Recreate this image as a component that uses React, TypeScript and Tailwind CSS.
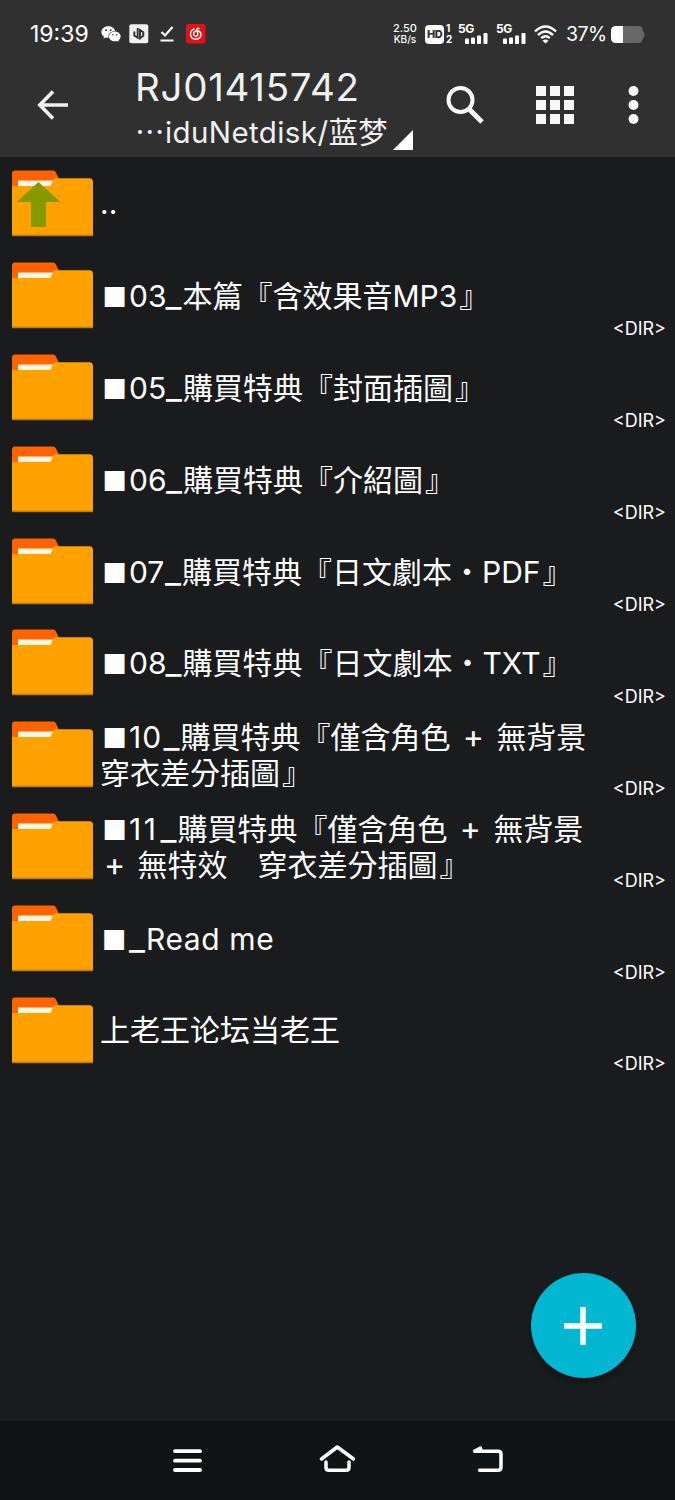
import { AiFillWechat } from "react-icons/ai";

type Entry = {
  id: string;
  lines: string[];
  up?: boolean;
};

const ENTRIES: Entry[] = [
  { id: "up", lines: [".."], up: true },
  { id: "03", lines: ["■03_本篇『含效果音MP3』"] },
  { id: "05", lines: ["■05_購買特典『封面插圖』"] },
  { id: "06", lines: ["■06_購買特典『介紹圖』"] },
  { id: "07", lines: ["■07_購買特典『日文劇本・PDF』"] },
  { id: "08", lines: ["■08_購買特典『日文劇本・TXT』"] },
  { id: "10", lines: ["■10_購買特典『僅含角色 + 無背景", "穿衣差分插圖』"] },
  { id: "11", lines: ["■11_購買特典『僅含角色 + 無背景", "+ 無特效　穿衣差分插圖』"] },
  { id: "readme", lines: ["■_Read me"] },
  { id: "forum", lines: ["上老王论坛当老王"] },
];

// Widths of the number between the square and the underscore
const NUMBER_WIDTH: Record<string, string> = {
  "03": "w-[36.5px]",
  "05": "w-[37px]",
  "06": "w-[37px]",
  "07": "w-[36px]",
  "08": "w-[36.5px]",
  "10": "w-[34.5px] tracking-[1px]",
  "11": "w-[31.5px] tracking-[2.5px]",
};

function FolderIcon({ up }: { up?: boolean }) {
  return (
    <svg width="81" height="67" viewBox="0 0 81 67" className="block shrink-0">
      <path d="M0 30V3.5Q0 .5 3 .5H41Q43 .5 44 2.5L47 9V30H0Z" fill="#ff6200" />
      <path
        d="M0 16H38L40.5 10.5Q41.8 8.3 44 8.3H77.5Q81 8.3 81 12V66H0Z"
        fill="#ffa200"
      />
      <path d="M6 10.5H41L38.5 16H6Z" fill="#fff6e0" />
      <rect y="64.6" width="81" height="1.6" fill="#c47d00" />
      {up && <path d="M26.5 12L48.5 32H34V57H19V32H4.5Z" fill="#859900" />}
    </svg>
  );
}

/* Splits out the glyphs that sit in a cell of their own */
function Line({ text }: { text: string }) {
  return (
    <span className="block whitespace-pre">
      {text.split(/(■|\+|_|』|\d\d(?=_))/).map((part, i) => {
        if (part === "■") {
          return (
            <span key={i} className="inline-block w-[29px] text-center text-[27px] leading-none">
              ■
            </span>
          );
        }
        if (part === "+") {
          return (
            <span key={i} className="inline-block w-[29px] text-center text-[32px] leading-none">
              +
            </span>
          );
        }
        if (part === "_") {
          return (
            <span key={i} className="inline-block w-[17px] text-[35px] leading-none">
              _
            </span>
          );
        }
        if (part === "』") {
          return (
            <span key={i} className="ml-[2px]">
              』
            </span>
          );
        }
        if (NUMBER_WIDTH[part]) {
          return (
            <span key={i} className={`inline-block ${NUMBER_WIDTH[part]}`}>
              {part}
            </span>
          );
        }
        return part;
      })}
    </span>
  );
}

function EntryRow({ entry }: { entry: Entry }) {
  return (
    <li className="flex h-[91.9px] items-center pl-3">
      <FolderIcon up={entry.up} />
      <p
        className={
          entry.id === "readme"
            ? "ml-[7px] flex-1 text-[30px] leading-[36px] tracking-[0.6px] text-white"
            : "ml-[7px] flex-1 text-[30px] leading-[36px] text-white"
        }
      >
        {entry.lines.map((line) => (
          <Line key={line} text={line} />
        ))}
      </p>
      {!entry.up && (
        <span className="mr-[9px] self-end text-[18px] leading-[24px] text-white">&lt;DIR&gt;</span>
      )}
    </li>
  );
}

function Signal() {
  return (
    <div className="relative h-5 w-[30px] text-white">
      <span className="absolute -top-px left-0 text-[12px] leading-[12px] font-bold tracking-[-0.5px]">5G</span>
      <svg width="23" height="11" viewBox="0 0 23 11" className="absolute right-0 bottom-0" fill="#fff">
        <rect x="0" y="5.5" width="4" height="5.5" rx="1" />
        <rect x="6" y="4.5" width="4" height="6.5" rx="1" />
        <rect x="12" y="2.5" width="4" height="8.5" rx="1" />
        <rect x="18.5" y="0" width="4" height="11" rx="1" />
      </svg>
    </div>
  );
}

function StatusBar() {
  return (
    <div className="flex h-[68px] items-center justify-between pr-[30px] pl-[30px] text-white">
      <div className="flex items-center">
        <span className="w-[70px] text-[23px] leading-none">19:39</span>
        <AiFillWechat className="h-[22px] w-[22px]" />
        <svg width="20" height="20" viewBox="0 0 20 20" className="ml-[7px]">
          <rect width="19" height="19" x=".3" y=".3" rx="2" fill="#f0f0f0" />
          <path
            d="M8.700 4V13.800L5.300 11.500V7.500M11 15.500V6L14.300 8.200V11.700L11 14"
            fill="none"
            stroke="#303030"
            strokeWidth="1.9"
          />
        </svg>
        <svg width="14" height="16" viewBox="0 0 14 16" className="ml-[11px]" fill="none" stroke="#fff" strokeWidth="2.2">
          <path d="M1.5 6L5 9.5L12.5 1M.5 14.5H13.5" />
        </svg>
        <svg width="20" height="20" viewBox="0 0 20 20" className="ml-[12px]" fill="none" stroke="#fff" strokeWidth="1.4" strokeLinecap="round">
          <rect width="19.5" height="19.5" rx="2" fill="#e60f14" stroke="none" />
          <path d="M8 5Q4.500 6.500 4.500 10.200Q4.800 15 9.700 15.200Q15 15 15 10.300Q14.500 6.800 10.500 6.800Q7.500 7.500 7.500 10Q7.800 12.200 9.800 12.200Q12 12 11.800 9.800L10.800 5.500Q11 3.600 13 4.600" />
        </svg>
      </div>
      <div className="flex items-center">
        <div className="w-6 text-center text-[11px] leading-[11px] font-medium whitespace-nowrap">
          <div>2.50</div>
          <div className="text-[10px]">KB/s</div>
        </div>
        <div className="ml-2 flex h-[19px] w-[19px] items-center justify-center rounded bg-white text-[11px] font-extrabold tracking-[-0.5px] text-[#303030]">
          HD
        </div>
        <div className="mr-[6px] ml-[2px] w-[6px] text-[10px] leading-[11px] font-bold">
          <div>1</div>
          <div>2</div>
        </div>
        <Signal />
        <div className="w-[8px]" />
        <Signal />
        <svg width="23" height="19" viewBox="0 0 23 19" className="ml-[8px]" fill="none" stroke="#fff" strokeWidth="2.4">
          <path d="M1 6.5Q11.5-3.5 22 6.5" />
          <path d="M4 10Q11.5 3 19 10" />
          <path d="M7.2 13.2Q11.5 9.5 15.8 13.2" />
          <path d="M11.5 18.5L8.500 15.700Q11.500 13.500 14.500 15.700Z" fill="#fff" stroke="none" />
        </svg>
        <span className="mt-px ml-[9px] w-[39px] text-[19.5px] leading-none tracking-[-0.5px]">37%</span>
        <svg width="34" height="17" viewBox="0 0 34 17" className="ml-[6px]">
          <path d="M12 0H28Q31 0 32 5Q33.5 6 33.5 8.5T32 12Q31 17 28 17H12Z" fill="#686868" />
          <path d="M12 0H5Q0 0 0 5V12Q0 17 5 17H12Z" fill="#fff" />
        </svg>
      </div>
    </div>
  );
}

function Toolbar() {
  return (
    <div className="flex h-[89px] pl-[37px]">
      <svg width="32" height="30" viewBox="0 0 32 30" className="mt-[22px]" fill="none" stroke="#f0f0f0" strokeWidth="3.6">
        <path d="M16 1.5L2.8 15L16 28.5M3 15H31" />
      </svg>
      <div className="ml-[66px] w-[310px] text-[#f0f0f0]">
        <h1 className="mt-[-3px] text-[38.5px] leading-[45px] tracking-[0.7px] whitespace-nowrap">
          RJ01415742
        </h1>
        <div className="flex">
          <span className="text-[29.5px] leading-[44px] tracking-[0.4px] whitespace-nowrap">
            <span className="inline-block w-[30px]">⋯</span>iduNetdisk/蓝梦
          </span>
          <svg width="20" height="20" viewBox="0 0 20 20" className="mt-5 ml-[5px]">
            <path d="M0 20L20 0V20Z" fill="#fff" />
          </svg>
        </div>
      </div>
      <svg width="38" height="38" viewBox="0 0 38 38" className="mt-[18px] ml-px shrink-0" fill="none" stroke="#f7f7f7">
        <circle cx="14.5" cy="14" r="12" strokeWidth="4" />
        <path d="M23.5 23.5L36 36" strokeWidth="5" />
      </svg>
      <svg width="39" height="39" viewBox="0 0 39 39" className="mt-[18px] ml-[52px] shrink-0" fill="#f7f7f7">
        {[0, 14, 28].map((y) =>
          [0, 14, 28].map((x) => <rect key={`${x}-${y}`} x={x} y={y} width="10" height="10" />),
        )}
      </svg>
      <svg width="11" height="39" viewBox="0 0 11 39" className="mt-[18px] ml-[53px] shrink-0" fill="#f7f7f7">
        <circle cx="5.5" cy="5" r="5" />
        <circle cx="5.5" cy="19" r="5" />
        <circle cx="5.5" cy="33" r="5" />
      </svg>
    </div>
  );
}

function NavBar() {
  return (
    <nav className="flex h-[79px] bg-[#101315] pt-[23px]">
      <svg width="30" height="32" viewBox="0 0 30 32" className="ml-[172px]" fill="none" stroke="#fff" strokeWidth="3.8" strokeLinecap="round">
        <path d="M3 7.2H28M3 16.7H28M3 26H28" />
      </svg>
      <svg width="36" height="32" viewBox="0 0 36 32" className="ml-[117px]" fill="none" stroke="#fff" strokeWidth="3.5" strokeLinecap="round" strokeLinejoin="round">
        <path d="M2.5 15L18.3 3L34.5 15" />
        <path d="M7 18V23.5Q7 26.3 10 26.3H27Q30 26.3 30 23.5V18" />
      </svg>
      <svg width="32" height="32" viewBox="0 0 32 32" className="ml-[117px]" fill="none" stroke="#fff" strokeWidth="3.5" strokeLinecap="round" strokeLinejoin="round">
        <path d="M7.5 26.3H26Q29 26.3 29 23.3V10Q29 7.2 26 7.2H2.5L8.5 4V7" />
      </svg>
    </nav>
  );
}

export default function App() {
  return (
    <div className="relative flex h-[1500px] w-[675px] flex-col overflow-hidden bg-[#1a1d1f] font-['Inter','Noto_Sans_CJK_TC','Noto_Sans_CJK_SC',sans-serif]">
      <header className="h-[157px] shrink-0 bg-[#303030]">
        <StatusBar />
        <Toolbar />
      </header>
      <ul className="bg-[#1a1b1d] pt-[0.5px]">
        {ENTRIES.map((entry) => (
          <EntryRow key={entry.id} entry={entry} />
        ))}
      </ul>
      <div className="flex-1" />
      <NavBar />
      <button
        type="button"
        aria-label="Add"
        className="absolute top-[1273px] left-[530.5px] flex h-[105px] w-[105px] items-center justify-center rounded-full bg-[#03b6d2] shadow-[0_4px_10px_rgba(0,0,0,0.4)]"
      >
        <svg width="38" height="38" viewBox="0 0 38 38" fill="none" stroke="#fff" strokeWidth="5.5">
          <path d="M19 0V38M0 19H38" />
        </svg>
      </button>
    </div>
  );
}
